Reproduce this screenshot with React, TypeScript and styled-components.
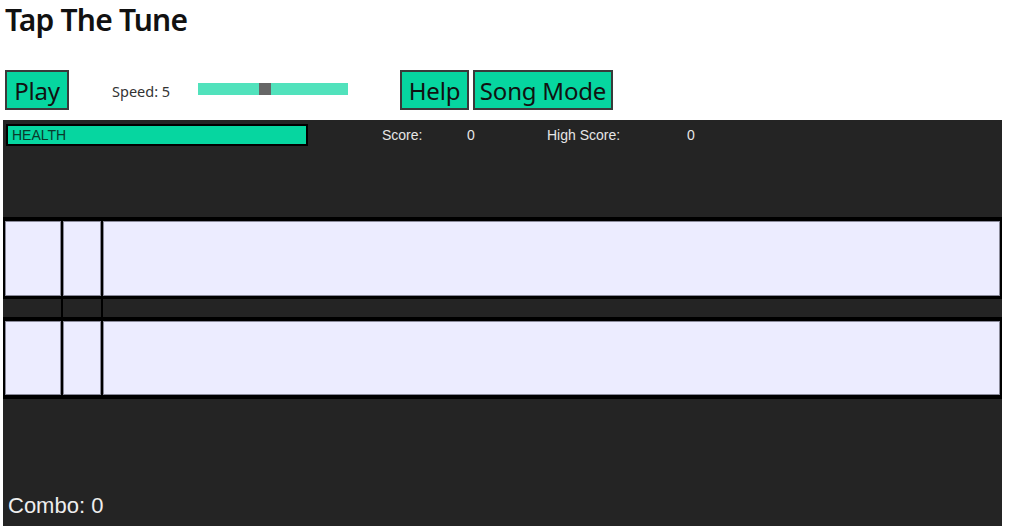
import React from "react";
import styled, { createGlobalStyle } from "styled-components";

const Global = createGlobalStyle`
  html, body { margin: 0; padding: 0; background: #ffffff; }
  body { font-family: "Noto Sans", sans-serif; color: #000; overflow: hidden; }
`;

const Page = styled.div`
  width: 1020px;
  height: 526px;
  overflow: hidden;
`;

const Title = styled.h1`
  margin: 0;
  padding-left: 5px;
  font-family: "Noto Sans", sans-serif;
  font-weight: 600;
  font-size: 30px;
  line-height: 41px;
  margin-top: -1px;
  color: #111;
  letter-spacing: -0.8px;
`;

const Controls = styled.div`
  display: flex;
  align-items: center;
  height: 40px;
  margin-top: 30px;
  padding-left: 5px;
`;

const Button = styled.button<{ $ml?: number; $w: number }>`
  box-sizing: border-box;
  width: ${(p) => p.$w}px;
  height: 40px;
  margin: 0 0 0 ${(p) => p.$ml ?? 0}px;
  padding: 2px 0 0;
  background: #06d6a0;
  border: 2px solid #3a3a3a;
  border-radius: 0;
  font-family: "Noto Sans", sans-serif;
  font-size: 24px;
  line-height: 34px;
  text-align: center;
  white-space: nowrap;
  letter-spacing: -0.2px;
  color: #111;
  cursor: pointer;
`;

const SpeedLabel = styled.span`
  margin-left: 43px;
  font-family: "Noto Sans", sans-serif;
  font-size: 14.5px;
  color: #333;
  width: 86px;
  padding-top: 2px;
`;

const Slider = styled.div`
  position: relative;
  width: 150px;
  height: 12px;
  margin-top: -2px;
  background: #51e2bc;
`;

const Thumb = styled.div`
  position: absolute;
  top: 0;
  width: 12px;
  height: 12px;
  background: #666666;
`;

const Game = styled.div`
  margin: 10px 0 0 3px;
  width: 999px;
  height: 420px;
  background: #242424;
  display: flex;
  flex-direction: column;
`;

const TopBar = styled.div`
  display: flex;
  height: 97px;
  align-items: flex-start;
  padding: 4px 0 0 3px;
  box-sizing: border-box;
`;

const Health = styled.div`
  box-sizing: border-box;
  width: 302px;
  height: 22px;
  border: 2px solid #000;
  background: #06d6a0;
  font-family: "Liberation Sans", Arial, sans-serif;
  font-size: 14px;
  line-height: 18px;
  padding-left: 4px;
  color: #0a3a2c;
`;

const Stat = styled.span<{ $w: number; $ml?: number }>`
  display: inline-block;
  width: ${(p) => p.$w}px;
  margin-left: ${(p) => p.$ml ?? 0}px;
  font-family: "Liberation Sans", Arial, sans-serif;
  font-size: 14px;
  line-height: 22px;
  color: #e6e6e6;
`;

const BlackBar = styled.div<{ $h: number }>`
  height: ${(p) => p.$h}px;
  background: #000;
`;

const Row = styled.div<{ $h: number; $lane?: boolean }>`
  display: grid;
  grid-template-columns: ${(p) => (p.$lane ? "56px 38px 1fr" : "58px 38px 1fr")};
  column-gap: 2px;
  height: ${(p) => p.$h}px;
  background: #000;
  padding: ${(p) => (p.$lane ? "0 2px" : "0")};
  box-sizing: border-box;
`;

const Cell = styled.div<{ $lane?: boolean }>`
  box-sizing: border-box;
  background: ${(p) => (p.$lane ? "#ececff" : "#242424")};
  border: ${(p) => (p.$lane ? "1px solid #8a8a9a" : "none")};
`;

const Combo = styled.div`
  margin-top: 94px;
  padding-left: 5px;
  font-family: "Liberation Sans", Arial, sans-serif;
  font-size: 22px;
  line-height: 25px;
  color: #eeeeee;
`;

const Lane = ({ h }: { h: number }) => (
  <Row $h={h} $lane>
    <Cell $lane />
    <Cell $lane />
    <Cell $lane />
  </Row>
);

export default function App() {
  return (
    <Page>
      <Global />
      <Title>Tap The Tune</Title>
      <Controls>
        <Button $w={64}>Play</Button>
        <SpeedLabel>Speed: 5</SpeedLabel>
        <Slider>
          <Thumb style={{ left: `${((5 - 1) / 9) * 138}px` }} />
        </Slider>
        <Button $w={69} $ml={52}>Help</Button>
        <Button $w={140} $ml={4}>Song Mode</Button>
      </Controls>
      <Game>
        <TopBar>
          <Health>HEALTH</Health>
          <Stat $w={85} $ml={74}>Score:</Stat>
          <Stat $w={80}>0</Stat>
          <Stat $w={140}>High Score:</Stat>
          <Stat $w={40}>0</Stat>
        </TopBar>
        <BlackBar $h={4} />
        <Lane h={75} />
        <BlackBar $h={3} />
        <Row $h={18}>
          <Cell />
          <Cell />
          <Cell />
        </Row>
        <BlackBar $h={4} />
        <Lane h={74} />
        <BlackBar $h={4} />
        <Combo>Combo: 0</Combo>
      </Game>
    </Page>
  );
}
